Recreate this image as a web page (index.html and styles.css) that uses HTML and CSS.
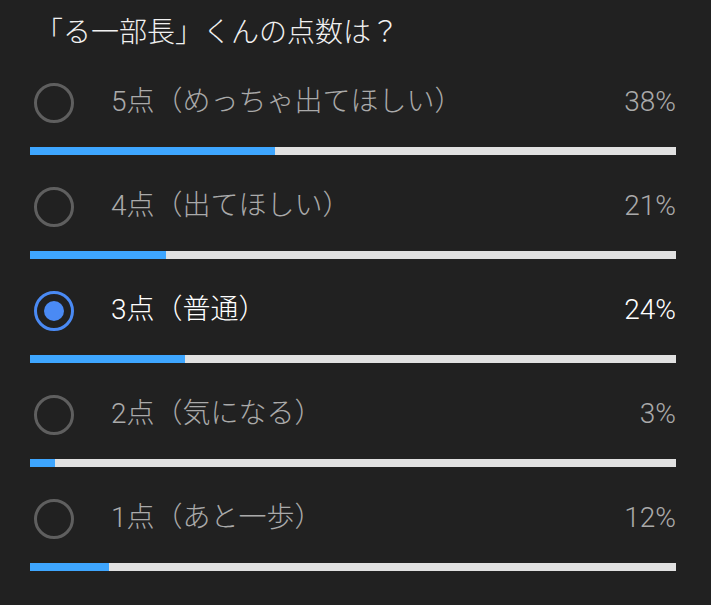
FILE: index.html
```html
<!DOCTYPE html>
<html lang="ja">
<head>
<meta charset="utf-8">
<link rel="stylesheet" href="styles.css">
</head>
<body>
<div class="poll">
  <div class="title">「る一部長」くんの点数は？</div>
  <div class="option">
    <div class="line"><span class="radio"></span><span class="label">5点（めっちゃ出てほしい）</span><span class="pct">38%</span></div>
    <div class="bar"><div class="fill" style="width:38%"></div></div>
  </div>
  <div class="option">
    <div class="line"><span class="radio"></span><span class="label">4点（出てほしい）</span><span class="pct">21%</span></div>
    <div class="bar"><div class="fill" style="width:21%"></div></div>
  </div>
  <div class="option selected">
    <div class="line"><span class="radio"></span><span class="label">3点（普通）</span><span class="pct">24%</span></div>
    <div class="bar"><div class="fill" style="width:24%"></div></div>
  </div>
  <div class="option">
    <div class="line"><span class="radio"></span><span class="label">2点（気になる）</span><span class="pct">3%</span></div>
    <div class="bar"><div class="fill" style="width:3.8%"></div></div>
  </div>
  <div class="option">
    <div class="line"><span class="radio"></span><span class="label">1点（あと一歩）</span><span class="pct">12%</span></div>
    <div class="bar"><div class="fill" style="width:12.3%"></div></div>
  </div>
</div>
</body>
</html>
```
FILE: styles.css
```css
html, body {
  margin: 0;
  padding: 0;
  background: #212121;
}
body {
  width: 711px;
  height: 605px;
  overflow: hidden;
  font-family: Roboto, "Noto Sans CJK JP", sans-serif;
  font-weight: 300;
}
.poll {
  padding: 0 35px 0 30px;
}
.title {
  height: 66px;
  line-height: 66px;
  color: #f1f1f1;
  font-size: 28px;
  padding-left: 5px;
}
.option {
  padding-bottom: 15px;
}
.line {
  height: 74px;
  display: flex;
  align-items: center;
  font-size: 28px;
  color: #aaaaaa;
}
.line span {
  line-height: 74px;
  position: relative;
  top: -1px;
}
.radio {
  box-sizing: border-box;
  width: 40px;
  height: 40px;
  border: 3px solid #5f5f5f;
  border-radius: 50%;
  margin-left: 4px;
  margin-right: 37px;
  display: flex;
  align-items: center;
  justify-content: center;
  flex: none;
}
.line span.radio {
  top: 0;
}
.label {
  flex: 1;
}
.pct {
  text-align: right;
}
.selected .line {
  color: #ffffff;
}
.selected .radio {
  border-color: #4a8af4;
}
.selected .radio::after {
  content: "";
  width: 20px;
  height: 20px;
  border-radius: 50%;
  background: #4a8af4;
}
.bar {
  margin-top: 7px;
  height: 8px;
  background: #e1e1e1;
}
.fill {
  height: 100%;
  background: #3ea6ff;
}
```
